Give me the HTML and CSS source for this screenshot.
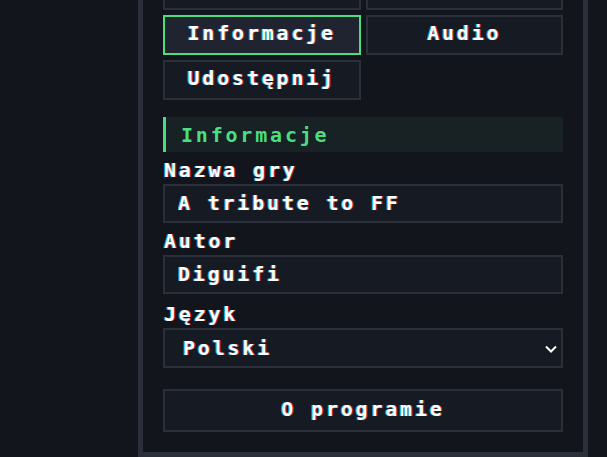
FILE: index.html
```html
<!DOCTYPE html>
<html lang="pl">
<head>
<meta charset="utf-8">
<title>Ustawienia gry</title>
<link rel="stylesheet" href="styles.css">
</head>
<body>
<div class="app">
  <aside class="panel">
    <nav class="tabs">
      <button class="tab" aria-label="Grafika"></button>
      <button class="tab" aria-label="Sceny"></button>
      <button class="tab tab--active">Informacje</button>
      <button class="tab">Audio</button>
      <button class="tab">Udostępnij</button>
    </nav>

    <h2 class="section-title">Informacje</h2>

    <div class="field">
      <label class="field-label" for="game-name">Nazwa gry</label>
      <input class="text-input" id="game-name" type="text" value="A tribute to FF">
    </div>

    <div class="field">
      <label class="field-label" for="author">Autor</label>
      <input class="text-input" id="author" type="text" value="Diguifi">
    </div>

    <div class="field field--select">
      <label class="field-label" for="lang">Język</label>
      <div class="select-wrap">
        <select class="select-input" id="lang">
          <option>Polski</option>
          <option>English</option>
        </select>
        <svg class="select-arrow" width="12" height="8" viewBox="0 0 12 8" aria-hidden="true">
          <path d="M1 1.5 L6 6.5 L11 1.5" fill="none" stroke="#ffffff" stroke-width="2"/>
        </svg>
      </div>
    </div>

    <button class="about-btn">O programie</button>
  </aside>
</div>
</body>
</html>
```

FILE: styles.css
```css
* {
  box-sizing: border-box;
}

html, body {
  margin: 0;
  height: 100%;
  overflow: hidden;
  background: #12151c;
}

body {
  font-family: "DejaVu Sans Mono", "Liberation Mono", monospace;
  font-weight: bold;
  font-size: 20px;
  letter-spacing: 2.8px;
  color: #ffffff;
}

.app {
  display: flex;
  justify-content: flex-end;
  padding-right: 19px;
}

.panel {
  width: 450px;
  margin-top: -55px;
  padding: 20px;
  background: #12151c;
  border: 5px solid #2b2f3a;
  display: flex;
  flex-direction: column;
}

/* glitchy RGB split on light text */
.tab,
.field-label,
.text-input,
.select-input,
.about-btn {
  text-shadow: -1px 0 rgba(0, 215, 255, 0.7), 1px 0 rgba(255, 40, 40, 0.7);
}

.tabs {
  display: grid;
  grid-template-columns: 1fr 1fr;
  gap: 5px;
}

.tab,
.about-btn {
  font: inherit;
  letter-spacing: inherit;
  color: #ffffff;
  background: #161a23;
  border: 2px solid #2b2f3a;
  height: 40px;
  padding: 0 0 4px;
  display: flex;
  align-items: center;
  justify-content: center;
  cursor: pointer;
}

.tab--active {
  background: #1f2430;
  border-color: #4ade80;
}

.section-title {
  margin: 17px 0 0;
  height: 35px;
  padding: 0 15px;
  display: flex;
  align-items: center;
  font-size: 20px;
  color: #4ade80;
  background: #182123;
  border-left: 3px solid #4ade80;
}

.field {
  display: flex;
  flex-direction: column;
  margin-top: 8px;
}

.field--select {
  margin-top: 10px;
}

.field-label {
  line-height: 20px;
  margin-bottom: 4px;
  padding-left: 1px;
}

.text-input,
.select-input {
  font: inherit;
  letter-spacing: inherit;
  color: #ffffff;
  background: #161a23;
  border: 2px solid #2b2f3a;
  height: 39px;
  padding: 0 13px 1px;
  outline: none;
  width: 100%;
}

.select-wrap {
  position: relative;
}

.select-input {
  appearance: none;
  -webkit-appearance: none;
  height: 40px;
  padding: 0 30px 0 18px;
  border-radius: 0;
}

.select-arrow {
  position: absolute;
  right: 6px;
  top: 17px;
  pointer-events: none;
}

.about-btn {
  margin-top: 21px;
  height: 43px;
}
```
